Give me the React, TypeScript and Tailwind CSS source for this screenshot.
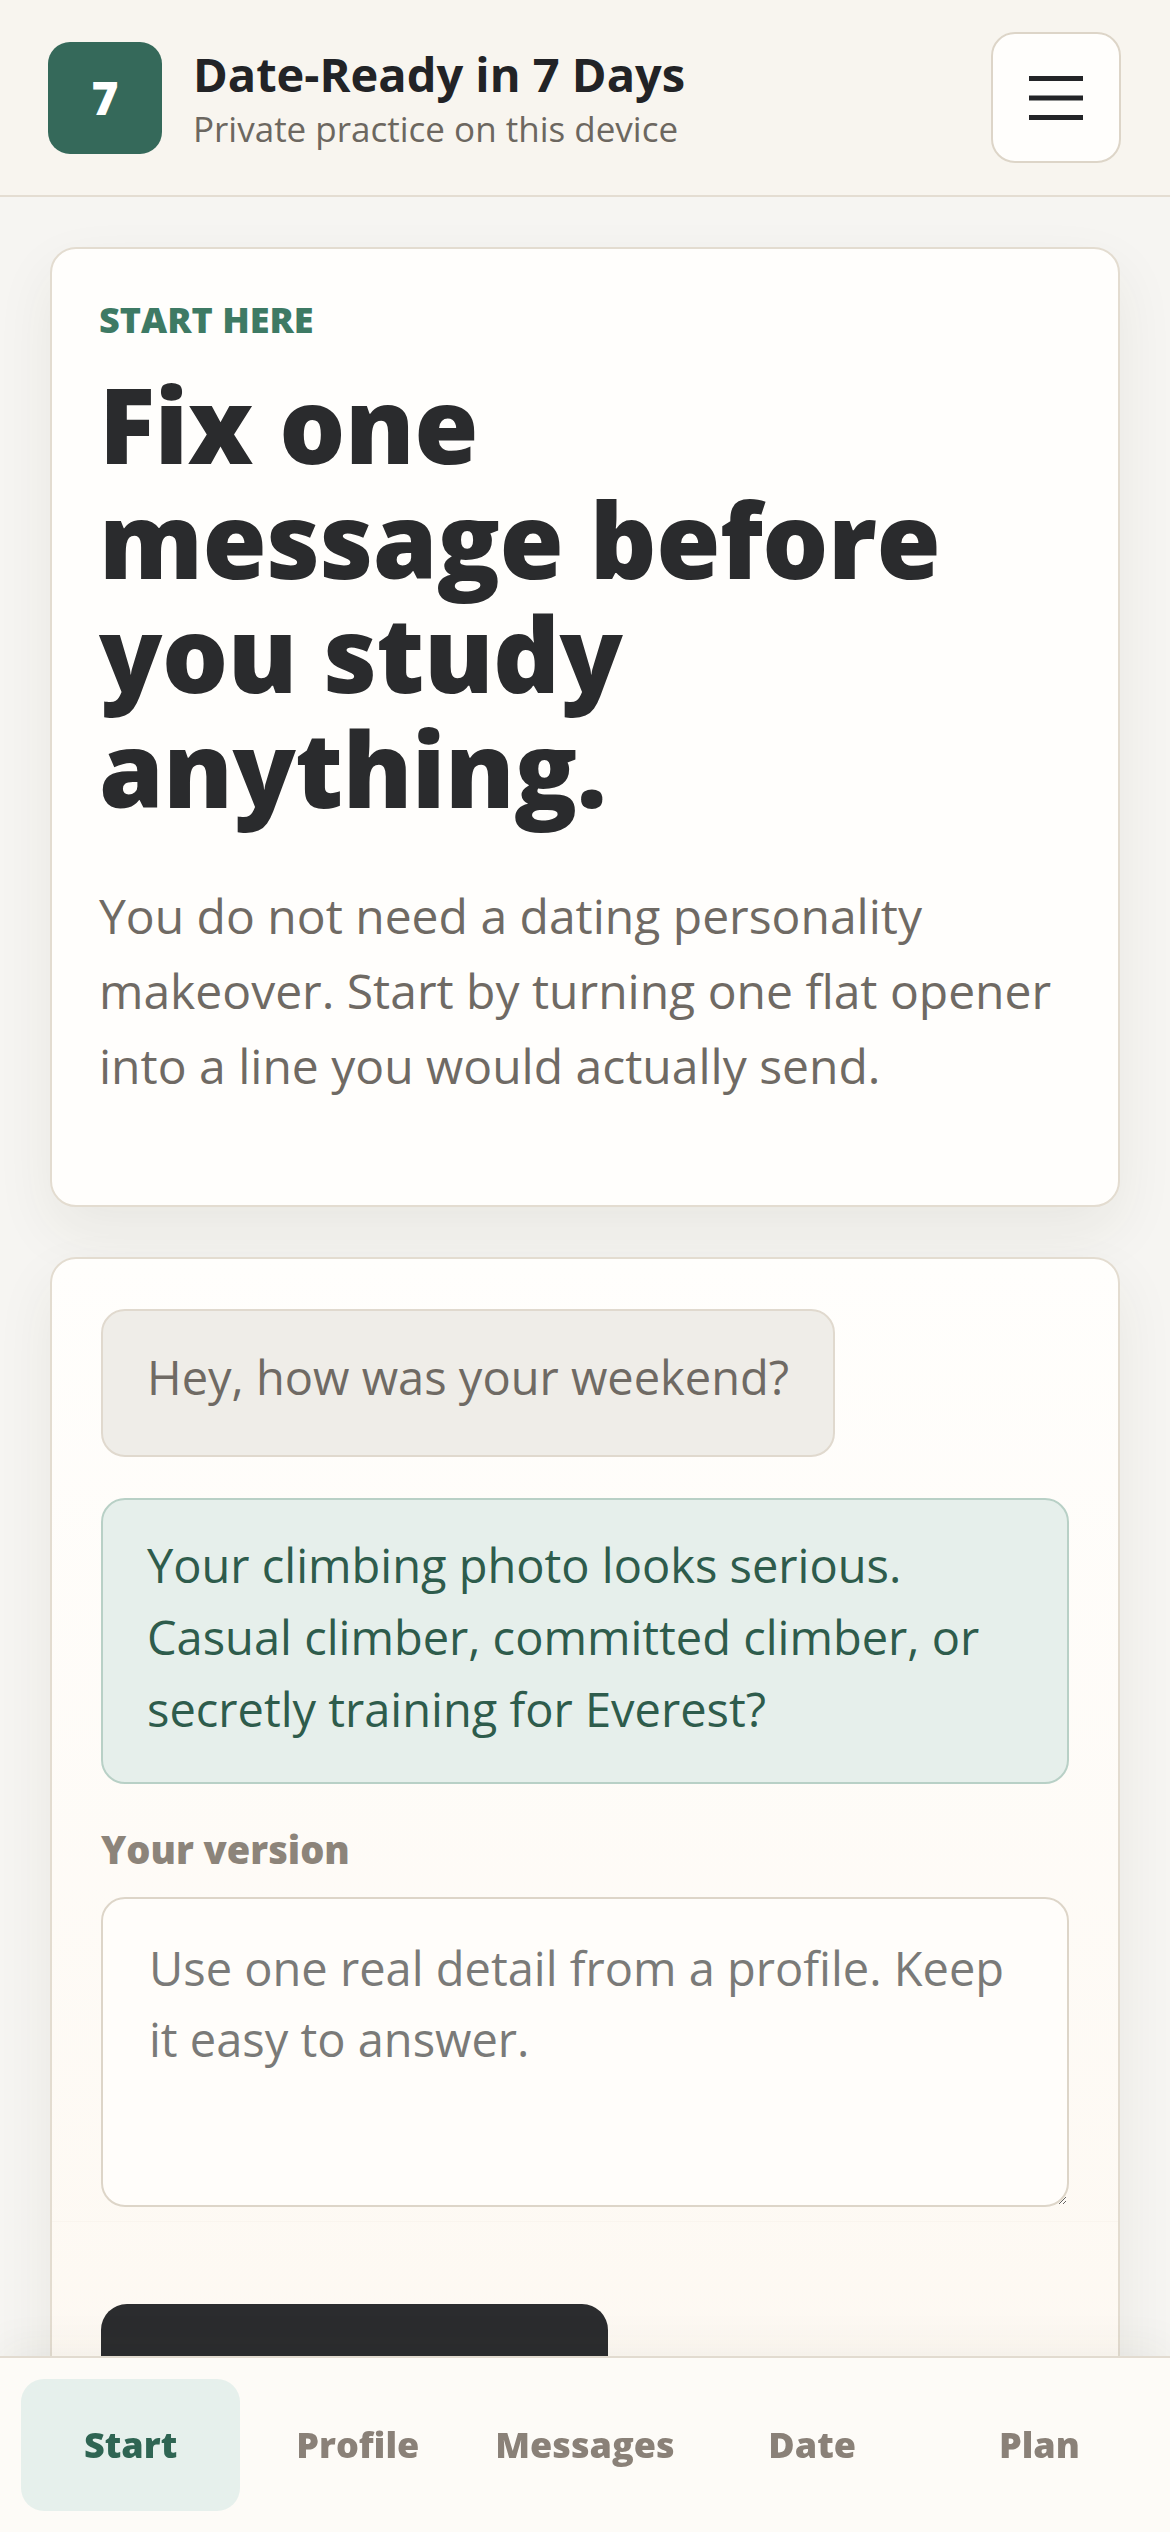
import React from "react";

const tabs = ["Start", "Profile", "Messages", "Date", "Plan"];

function MenuIcon() {
  return (
    <svg width="54" height="44" viewBox="0 0 54 44" fill="none">
      <rect x="0" y="0" width="54" height="5" fill="#232427" />
      <rect x="0" y="19.5" width="54" height="5" fill="#232427" />
      <rect x="0" y="39" width="54" height="5" fill="#232427" />
    </svg>
  );
}

export default function App() {
  return (
    <div
      className="min-h-screen bg-[#f6f5f2] text-[#2a2b2d]"
      style={{ fontFamily: "'Open Sans', Lato, sans-serif" }}
    >
      <header className="flex h-[197px] items-center justify-between border-b-2 border-[#e4ddd2] bg-[#f8f5ef] pl-[48px] pr-[49px]">
        <div className="flex items-center gap-[31px]">
          <div className="flex h-[112px] w-[114px] items-center justify-center rounded-[22px] bg-[#35695a] text-[46px] font-extrabold text-white">
            7
          </div>
          <div className="flex flex-col">
            <span className="text-[47px] font-bold leading-[60px] text-[#222326]">
              Date-Ready in 7 Days
            </span>
            <span className="mt-[2px] text-[35px] leading-[46px] text-[#6c6760]">
              Private practice on this device
            </span>
          </div>
        </div>
        <button className="flex h-[131px] w-[130px] items-center justify-center rounded-[24px] border-2 border-[#ddd5c8] bg-[#fffefc]">
          <MenuIcon />
        </button>
      </header>

      <main className="flex flex-col gap-[50px] px-[50px] pb-[240px] pt-[50px]">
        <section className="rounded-[26px] border-2 border-[#e3dcd0] bg-[#fffefc] px-[47px] pb-[102px] pt-[49px] shadow-[0_24px_60px_rgba(60,50,30,0.07)]">
          <p className="text-[36px] font-extrabold leading-[44px] text-[#3e7a64]">
            START HERE
          </p>
          <h1 className="mt-[25px] text-[104px] font-extrabold leading-[114.5px] tracking-[-0.005em] text-[#2a2b2d]">
            Fix one
            <br />
            message before
            <br />
            you study
            <br />
            anything.
          </h1>
          <p className="mt-[53px] text-[48px] leading-[75px] text-[#6f6a64]">
            You do not need a dating personality makeover. Start by turning one
            flat opener into a line you would actually send.
          </p>
        </section>

        <section className="rounded-[26px] border-2 border-[#e3dcd0] bg-gradient-to-b from-[#fffefc] to-[#fdf8f1] pt-[50px] shadow-[0_24px_60px_rgba(60,50,30,0.07)]">
          <div className="px-[49px]">
            <div className="inline-block rounded-[24px] border-2 border-[#e0d9ce] bg-[#efede8] px-[44px] pb-[42px] pt-[30px] text-[47px] leading-[72px] text-[#6f6a64]">
              Hey, how was your weekend?
            </div>
            <div className="mt-[41px] rounded-[24px] border-2 border-[#b8d0c6] bg-[#e6efeb] px-[44px] pb-[37px] pt-[29px] text-[47px] leading-[72px] text-[#2e5c4c]">
              Your climbing photo looks serious. Casual climber, committed
              climber, or secretly training for Everest?
            </div>
            <label className="mt-[41px] block text-[38px] font-extrabold leading-[48px] text-[#8c847a]">
              Your version
            </label>
            <textarea
              className="mt-[24px] block h-[310px] w-full resize-y rounded-[24px] border-2 border-[#ddd5c8] bg-[#fffdfa] px-[46px] pt-[34px] text-[47px] leading-[71px] text-[#2a2b2d] placeholder:text-[#7a7a78] focus:outline-none"
              placeholder="Use one real detail from a profile. Keep it easy to answer."
            />
          </div>
          <div className="mt-[14px] border-t border-[#faf5ee] px-[49px] pb-[60px] pt-[82px]">
            <button
              aria-label="Check my line"
              className="h-[130px] w-[507px] rounded-[26px] bg-[#2b2c2e]"
            />
          </div>
        </section>
      </main>

      <nav className="fixed inset-x-0 bottom-0 grid h-[176px] grid-cols-5 gap-[8px] border-t-2 border-[#e2dbd0] bg-[#fdfbf7] px-[21px] pt-[21px] pb-[21px] shadow-[0_-10px_40px_rgba(60,50,30,0.05)]">
        {tabs.map((t, i) => (
          <div
            key={t}
            className={
              i === 0
                ? "flex h-[132px] items-center justify-center rounded-[23px] bg-[#e6f0ec] text-[36px] font-extrabold text-[#2f6553]"
                : "flex h-[132px] items-center justify-center rounded-[23px] text-[36px] font-extrabold text-[#8a8178]"
            }
          >
            {t}
          </div>
        ))}
      </nav>
    </div>
  );
}
